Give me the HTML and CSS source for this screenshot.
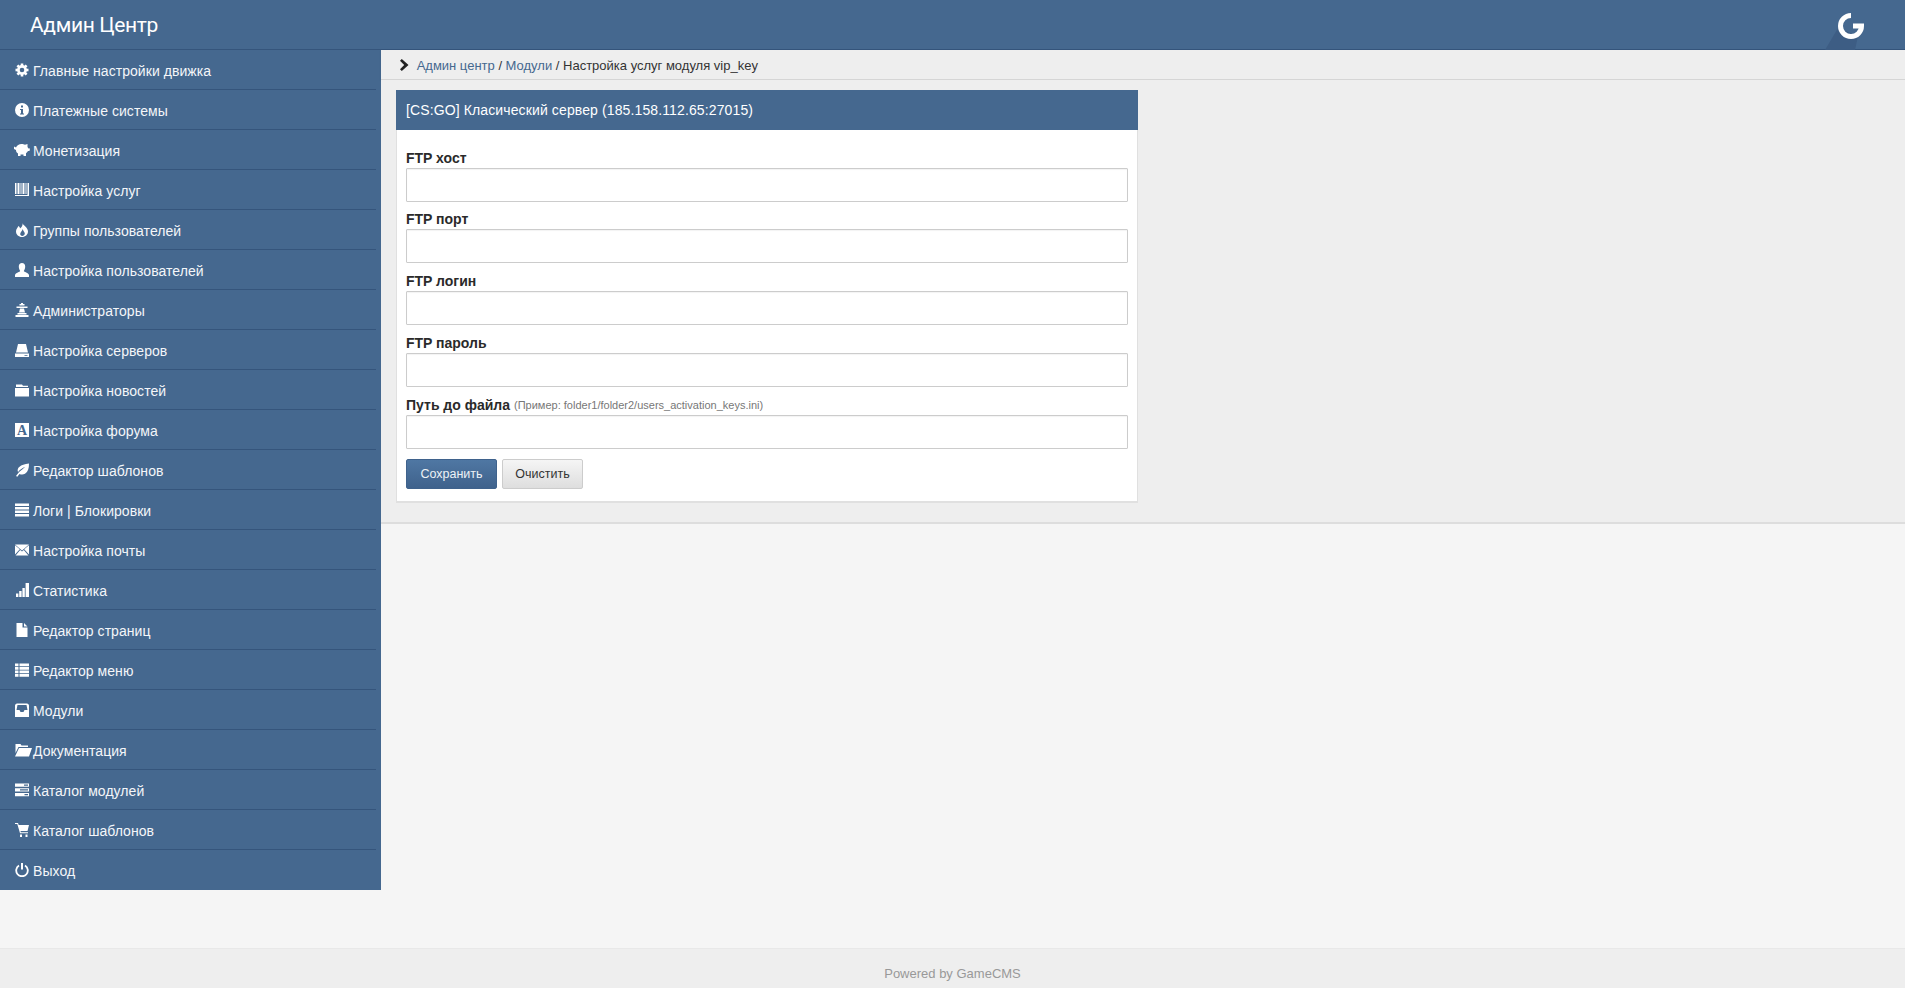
FILE: index.html
```html
<!DOCTYPE html>
<html lang="en">
<head>
    <meta charset="UTF-8">
    <meta name="viewport" content="width=device-width, initial-scale=1.0">
    <title>Админ Центр</title>
    <link rel="stylesheet" href="styles.css">
</head>
<body>
    <header class="topbar">
        <div class="brand">Админ Центр</div>
        <svg class="logo" viewBox="0 0 60 50" width="60" height="50">
            <path d="M33 28L20 50h30l3-14z" fill="#3d5d84"/>
            <path d="M46 15.500A10.500 10.500 0 1 0 56.500 26H48" fill="none" stroke="#fff" stroke-width="5"/>
        </svg>
    </header>

    <div class="layout">
        <nav class="sidebar">
            <a class="nav-item" href="#">
                <svg class="icon" viewBox="0 0 14 14"><circle cx="7" cy="7" r="3.600" fill="none" stroke="#fff" stroke-width="2.600"/><g fill="#fff"><rect x="5.700" y=".5" width="2.600" height="3"/><rect x="5.700" y=".5" width="2.600" height="3" transform="rotate(45 7 7)"/><rect x="5.700" y=".5" width="2.600" height="3" transform="rotate(90 7 7)"/><rect x="5.700" y=".5" width="2.600" height="3" transform="rotate(135 7 7)"/><rect x="5.700" y=".5" width="2.600" height="3" transform="rotate(180 7 7)"/><rect x="5.700" y=".5" width="2.600" height="3" transform="rotate(225 7 7)"/><rect x="5.700" y=".5" width="2.600" height="3" transform="rotate(270 7 7)"/><rect x="5.700" y=".5" width="2.600" height="3" transform="rotate(315 7 7)"/></g></svg>
                Главные настройки движка
            </a>
            <a class="nav-item" href="#">
                <svg class="icon" viewBox="0 0 14 14"><path fill="#fff" fill-rule="evenodd" d="M7 0a7 7 0 1 0 0 14A7 7 0 0 0 7 0zM6 2.500h2v2H6zM5 6h3v4.500h1v1H5v-1h1V7H5z"/></svg>
                Платежные системы
            </a>
            <a class="nav-item" href="#">
                <svg class="icon icon-wide" viewBox="0 0 16 14"><path fill="#fff" d="M0 3.500l2 1C3 2.500 5 1 7.500 1c1.500 0 2.500.3 3.500.8L13.500 1v3l1 1.500H16l-.5 2.500H14c-.5 1-1.300 1.800-2 2.300V13H9.500v-1.500h-3V13H4v-2.500C2.500 9.500 2 8.500 2 7L0 6z"/></svg>
                Монетизация
            </a>
            <a class="nav-item" href="#">
                <svg class="icon" viewBox="0 0 14 14"><path fill="#fff" d="M0 0h1.500v11H0zM2.500 0h2v11h-2zM5.500 0h1v11h-1zM7.500 0h2v11h-2zM10.500 0h1v11h-1zM12.500 0H14v13H0v-1h12.500z"/></svg>
                Настройка услуг
            </a>
            <a class="nav-item" href="#">
                <svg class="icon" viewBox="0 0 14 14"><path fill="#fff" fill-rule="evenodd" d="M7.500 0c.3 2.500 5.500 4 5.500 8.500 0 3-2.700 5.500-6 5.500S1 11.500 1 8.500c0-2.500 1.800-3.500 2.300-5.500 1 .5 1.700 1.500 1.700 2.500C6.500 4.500 8 2.500 7.500 0zM7.700 6C7.500 8 5.200 9 5.200 11c0 1 .8 1.900 2 1.900S9.800 12 9.800 10.800C9.800 9 8 8 7.700 6z"/></svg>
                Группы пользователей
            </a>
            <a class="nav-item" href="#">
                <svg class="icon" viewBox="0 0 14 14"><path fill="#fff" d="M7 0c2 0 3.200 1.500 3.200 3.500S9.300 7 8.800 8c0 1 4.700 1.500 5.200 4v2H0v-2c.5-2.500 5.200-3 5.200-4C4.700 7 3.800 5.500 3.800 3.500S5 0 7 0z"/></svg>
                Настройка пользователей
            </a>
            <a class="nav-item" href="#">
                <svg class="icon" viewBox="0 0 14 14"><path fill="#fff" d="M6 0h2v1h1.500v1.500h-5V1H6zM1.500 3.500h11V5h-11zM5 5.500h4l1 4H4zM2.500 10h9v1.500h-9zM.5 12h13v2H.5z"/></svg>
                Администраторы
            </a>
            <a class="nav-item" href="#">
                <svg class="icon" viewBox="0 0 14 14"><path fill="#fff" d="M3 1h8l2 8.500H1zM0 10.500h14V14H0zM9.500 12v.8h3V12z" fill-rule="evenodd"/></svg>
                Настройка серверов
            </a>
            <a class="nav-item" href="#">
                <svg class="icon" viewBox="0 0 14 14"><path fill="#fff" d="M1 1.500h6l1 1.200h5V4H1zM0 5h14v8.500H0z"/></svg>
                Настройка новостей
            </a>
            <a class="nav-item" href="#">
                <svg class="icon" viewBox="0 0 14 14"><rect width="14" height="14" fill="#fff"/><text class="icon-letter" x="7" y="12" text-anchor="middle">A</text></svg>
                Настройка форума
            </a>
            <a class="nav-item" href="#">
                <svg class="icon" viewBox="0 0 14 14"><path fill="#fff" d="M14 .5c0 5-1 8.500-4 10.200-2 1.100-4 .8-5.500.2L2.300 13.700 1 13l2.500-3.300C7 6.500 8 6 10 4 7.500 5 5 6.500 3 9 1.500 5 5 1.500 14 .5z"/></svg>
                Редактор шаблонов
            </a>
            <a class="nav-item" href="#">
                <svg class="icon" viewBox="0 0 14 14"><path fill="#fff" d="M0 .5h14v2.500H0zM0 4h14v2.500H0zM0 7.500h14V10H0zM0 11h14v2.500H0z"/></svg>
                Логи | Блокировки
            </a>
            <a class="nav-item" href="#">
                <svg class="icon" viewBox="0 0 14 14"><path fill="#fff" d="M0 1.500h14L7 7.500zM0 2.200v9.400L4.800 6.300zM14 2.200v9.400L9.200 6.300zM.6 12.500h12.800L8.800 7 7 8.600 5.200 7z"/></svg>
                Настройка почты
            </a>
            <a class="nav-item" href="#">
                <svg class="icon" viewBox="0 0 14 14"><path fill="#fff" d="M1 10.500h2.400V14H1zM4.200 8h2.400v6H4.200zM7.400 5h2.400v9H7.400zM10.600 0H14v14h-3.400z"/></svg>
                Статистика
            </a>
            <a class="nav-item" href="#">
                <svg class="icon" viewBox="0 0 14 14"><path fill="#fff" d="M1.500 0h6v4.500h5V14h-11zM9 0l3.500 3.500H9z"/></svg>
                Редактор страниц
            </a>
            <a class="nav-item" href="#">
                <svg class="icon" viewBox="0 0 14 14"><path fill="#fff" d="M0 .5h3.500v2.800H0zM4.500.5H14v2.800H4.500zM0 4h3.500v2.800H0zM4.500 4H14v2.800H4.500zM0 7.500h3.500v2.800H0zM4.500 7.500H14v2.800H4.500zM0 11h3.500v2.800H0zM4.500 11H14v2.800H4.500z"/></svg>
                Редактор меню
            </a>
            <a class="nav-item" href="#">
                <svg class="icon" viewBox="0 0 14 14"><path fill="#fff" fill-rule="evenodd" d="M2 .5h10c1 0 2 1 2 2V14H0V2.500c0-1 1-2 2-2zM2.500 2L1.500 7h3l1 2h3l1-2h3l-1-5z"/></svg>
                Модули
            </a>
            <a class="nav-item" href="#">
                <svg class="icon icon-folder" viewBox="0 0 17 14"><path fill="#fff" d="M.5 1h5l1 1.500H13V4H3.500L.5 10zM4 5h13l-3 8.500H0z"/></svg>
                Документация
            </a>
            <a class="nav-item" href="#">
                <svg class="icon" viewBox="0 0 14 14"><path fill="#fff" fill-rule="evenodd" d="M0 .5h14v3.300H0zM0 5.200h14v3.300H0zM0 9.900h14v3.300H0zM9 1.500v1.200h4V1.500zM5 6.300v1.200h8V6.300zM9.500 11v1.200H13V11z"/></svg>
                Каталог модулей
            </a>
            <a class="nav-item" href="#">
                <svg class="icon" viewBox="0 0 14 14"><path fill="#fff" d="M0 0h3l.7 2H14l-1.500 6H5.500l.3 1.300H13v1H5L2.300 1H0zM5 11.500h2V14H5zM10.500 11.500h2V14h-2z"/></svg>
                Каталог шаблонов
            </a>
            <a class="nav-item nav-last" href="#">
                <svg class="icon" viewBox="0 0 14 14"><path fill="none" stroke="#fff" stroke-width="1.800" d="M4 2.500a5.800 5.800 0 1 0 6 0"/><path fill="#fff" d="M6 0h2v6.500H6z"/></svg>
                Выход
            </a>
        </nav>

        <main class="content">
            <div class="breadcrumbs">
                <svg class="crumb-arrow" viewBox="0 0 9 12" width="9" height="12"><path fill="#222" d="M0 1.800L1.800 0 8.500 6l-6.700 6L0 10.200 4.200 6z"/></svg>
                <a href="#">Админ центр</a> / <a href="#">Модули</a> / <span class="crumb-current">Настройка услуг модуля vip_key</span>
            </div>

            <section class="page-section">
                <div class="card">
                    <div class="card-head">[CS:GO] Класический сервер (185.158.112.65:27015)</div>
                    <form class="card-body">
                        <label class="field-label" for="host">FTP хост</label>
                        <input class="field" id="host" type="text">
                        <label class="field-label" for="port">FTP порт</label>
                        <input class="field" id="port" type="text">
                        <label class="field-label" for="login">FTP логин</label>
                        <input class="field" id="login" type="text">
                        <label class="field-label" for="pass">FTP пароль</label>
                        <input class="field" id="pass" type="text">
                        <label class="field-label field-label-hint" for="path">Путь до файла <small>(Пример: folder1/folder2/users_activation_keys.ini)</small></label>
                        <input class="field" id="path" type="text">
                        <div class="actions">
                            <button class="btn btn-save" type="button">Сохранить</button>
                            <button class="btn btn-clear" type="button">Очистить</button>
                        </div>
                    </form>
                </div>
            </section>
        </main>
    </div>

    <footer class="footer">Powered by GameCMS</footer>
</body>
</html>
```

FILE: styles.css
```css
body {
    font-family: "Liberation Sans", Arial, sans-serif;
    font-size: 14px;
    color: #333;
    background: #f5f5f5;
    margin: 0;
    min-height: 100vh;
    display: flex;
    flex-direction: column;
}
.topbar {
    height: 49px;
    background: #45688f;
    border-bottom: 1px solid #35557c;
    display: flex;
    justify-content: space-between;
    align-items: flex-start;
    padding: 0 40px 0 30px;
}
.brand {
    color: #fff;
    font-family: Roboto, sans-serif;
    font-size: 21px;
    letter-spacing: -0.35px;
    line-height: 50px;
}
.logo {
    display: block;
}
.layout {
    flex: 1;
    display: flex;
    align-items: flex-start;
}
.sidebar {
    width: 381px;
    flex: none;
    background: #45688f;
}
.nav-item {
    display: flex;
    align-items: center;
    height: 37px;
    margin-right: 5px;
    padding: 2px 0 0 15px;
    color: #f4f6f9;
    letter-spacing: 0.05px;
    text-decoration: none;
    border-bottom: 1px solid #35557c;
}
.nav-last {
    border-bottom-color: transparent;
}
.icon {
    width: 14px;
    height: 14px;
    flex: none;
    margin-right: 4px;
    margin-top: -2px;
}
.icon-wide {
    width: 16px;
    margin-left: -1px;
    margin-right: 3px;
}
.icon-folder {
    width: 17px;
    margin-right: 1px;
}
.icon-letter {
    font-family: "Liberation Serif", serif;
    font-size: 14px;
    font-weight: bold;
    fill: #45688f;
}
.content {
    flex: 1;
    min-width: 0;
}
.breadcrumbs {
    height: 29px;
    line-height: 31px;
    padding-left: 19px;
    font-size: 13px;
    background: #eee;
    border-bottom: 1px solid #d5d5d5;
    box-shadow: 0 1px 2px rgba(0, 0, 0, 0.08);
}
.breadcrumbs a {
    color: #45688f;
    text-decoration: none;
}
.crumb-arrow {
    margin-right: 4px;
    vertical-align: -1px;
}
.crumb-current {
    color: #333;
}
.page-section {
    background: #eee;
    padding: 10px 15px 19px;
    border-bottom: 2px solid #ddd;
}
.card {
    width: 742px;
    background: #fff;
    border: 1px solid #e0e0e0;
    border-top: none;
    border-bottom-width: 2px;
    box-sizing: border-box;
}
.card-head {
    height: 40px;
    line-height: 40px;
    margin: 0 -1px;
    padding: 0 10px;
    background: #45688f;
    color: #fff;
    letter-spacing: 0.12px;
}
.card-body {
    padding: 10px 9px 12px;
}
.field-label {
    display: flex;
    align-items: flex-end;
    gap: 4px;
    height: 27.700px;
    line-height: 20px;
    font-weight: bold;
    color: #2a2a2a;
}
.field-label-hint {
    height: 28.700px;
}
.field-label small {
    font-size: 11px;
    font-weight: normal;
    color: #777;
}
.field {
    display: block;
    width: 100%;
    height: 34px;
    box-sizing: border-box;
    border: 1px solid #ccc;
    border-radius: 1px;
    box-shadow: inset 0 1px 1px rgba(0, 0, 0, 0.05);
    background: #fff;
    outline: none;
}
.actions {
    display: flex;
    gap: 5px;
    margin-top: 10px;
}
.btn {
    height: 30px;
    padding: 0;
    font-family: inherit;
    font-size: 12.500px;
    border-radius: 2px;
    cursor: pointer;
}
.btn-save {
    width: 91px;
    color: #eef2f6;
    background: linear-gradient(#4f77a3, #3f628c);
    border: 1px solid #3f628c;
}
.btn-clear {
    width: 81px;
    color: #333;
    background: linear-gradient(#f5f5f5, #dedede);
    border: 1px solid #ccc;
}
.footer {
    height: 39px;
    line-height: 50px;
    font-size: 13px;
    text-align: center;
    color: #999;
    background: #eee;
    border-top: 1px solid #e8e8e8;
}
```
